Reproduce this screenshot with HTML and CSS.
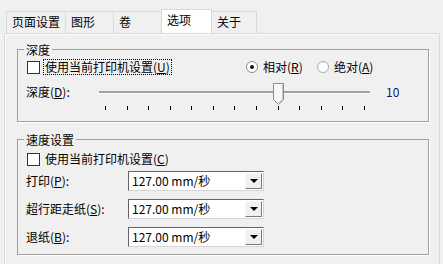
FILE: index.html
```html
<!DOCTYPE html>
<html lang="zh-CN">
<head>
<meta charset="utf-8">
<title>选项</title>
<link rel="stylesheet" href="styles.css">
</head>
<body>
<div class="tabs">
  <div class="tab t1">页面设置</div>
  <div class="tab t2">图形</div>
  <div class="tab t3">卷</div>
  <div class="tab active">选项</div>
  <div class="tab t5">关于</div>
</div>
<div class="panel">
  <fieldset class="group g1">
    <legend>深度</legend>
    <div class="row">
      <label class="check main"><span class="box"></span><span class="focus">使用当前打印机设置(<u>U</u>)</span></label>
      <label class="radio r1"><svg class="rdot" width="12" height="12" viewBox="0 0 12 12"><circle cx="6" cy="6" r="5.5" fill="#fff" stroke="#8a8a8a"/><circle cx="6" cy="6" r="2" fill="#111"/></svg><span>相对(<u>R</u>)</span></label>
      <label class="radio"><svg class="rdot" width="12" height="12" viewBox="0 0 12 12"><circle cx="6" cy="6" r="5.5" fill="#fff" stroke="#a8a8a8"/></svg><span>绝对(<u>A</u>)</span></label>
    </div>
    <div class="slider-row">
      <span class="slabel">深度(<u>D</u>):</span>
      <div class="slider">
        <div class="track"></div>
        <div class="ticks"><i></i><i></i><i></i><i></i><i></i><i></i><i></i><i></i><i></i><i></i><i></i><i></i><i></i></div>
        <svg class="thumb" width="11" height="22" viewBox="0 0 11 22"><path d="M0.5 0.5H10.5V16.5L5.5 21.5L0.5 16.5Z" fill="#f7f7f7" stroke="#8c8c8c"/><path d="M9.5 1.5V16L5.5 20" fill="none" stroke="#c4c4c4"/></svg>
      </div>
      <span class="value">10</span>
    </div>
  </fieldset>
  <fieldset class="group g2">
    <legend>速度设置</legend>
    <div class="row">
      <label class="check"><span class="box"></span><span class="plain">使用当前打印机设置(<u>C</u>)</span></label>
    </div>
    <div class="field first">
      <span class="flabel">打印(<u>P</u>):</span>
      <div class="combo"><span class="ctext">127.00 mm/秒</span><span class="cbtn"><i class="arrow"></i></span></div>
    </div>
    <div class="field">
      <span class="flabel">超行距走纸(<u>S</u>):</span>
      <div class="combo"><span class="ctext">127.00 mm/秒</span><span class="cbtn"><i class="arrow"></i></span></div>
    </div>
    <div class="field">
      <span class="flabel">退纸(<u>B</u>):</span>
      <div class="combo"><span class="ctext">127.00 mm/秒</span><span class="cbtn"><i class="arrow"></i></span></div>
    </div>
  </fieldset>
</div>
</body>
</html>
```
FILE: styles.css
```css
html, body {
  margin: 0;
  padding: 0;
}
body {
  width: 443px;
  height: 264px;
  overflow: hidden;
  background: #f0f0f0;
  color: #000;
  font-family: "Noto Sans CJK SC", "Noto Sans", sans-serif;
  font-size: 12px;
  line-height: 16px;
}
u {
  text-decoration: underline;
  text-underline-offset: 1px;
}

/* tabs */
.tabs {
  display: flex;
  align-items: flex-end;
  height: 33px;
  padding-left: 6px;
  box-sizing: border-box;
}
.tab {
  box-sizing: border-box;
  height: 22px;
  margin-right: -1px;
  padding-left: 5px;
  border: 1px solid #d9d9d9;
  border-bottom: none;
  background: #f0f0f0;
  line-height: 20px;
  white-space: nowrap;
}
.t1 { width: 60px; }
.t2 { width: 49px; }
.t3 { width: 49px; }
.t5 { width: 46px; }
.tab.active {
  position: relative;
  z-index: 1;
  width: 51px;
  height: 24px;
  background: #fff;
  padding-top: 1px;
  line-height: 18px;
}

/* panel */
.panel {
  box-sizing: border-box;
  width: 436px;
  height: 240px;
  margin-left: 4px;
  padding: 8px 0 0 12px;
  border: 1px solid #d9d9d9;
  box-shadow: inset 1px 1px 0 #fcfcfc;
}

/* group boxes */
.group {
  box-sizing: border-box;
  width: 412px;
  margin: 0;
  padding: 2px 8px 9px 8px;
  border: 1px solid #a0a0a0;
  box-shadow: 1px 1px 0 #fff;
  min-width: 0;
}
.group legend {
  padding: 0 2px;
  margin-left: -2px;
  line-height: 15px;
}
.g2 {
  margin-top: 10px;
  padding-top: 4px;
  padding-bottom: 7px;
}

.row {
  display: flex;
  align-items: center;
  height: 16px;
}
.check {
  display: flex;
  align-items: center;
}
.check.main {
  width: 220px;
}
.box {
  box-sizing: border-box;
  width: 13px;
  height: 13px;
  margin-left: 1px;
  border: 1px solid #333;
  background: #fff;
}
.focus {
  margin-left: 3px;
  padding: 0 1px;
  border: 1px dotted #000;
  line-height: 14px;
}
.plain {
  margin-left: 5px;
}
.radio {
  display: flex;
  align-items: center;
}
.r1 {
  width: 71px;
}
.rdot {
  display: block;
  margin-right: 5px;
}

/* slider */
.slider-row {
  display: flex;
  align-items: flex-start;
  margin-top: 4px;
  height: 33px;
}
.slabel {
  width: 73px;
  margin-top: 5px;
}
.slider {
  position: relative;
  width: 271px;
  height: 33px;
}
.track {
  margin-top: 12px;
  height: 2px;
  background: #a0a0a0;
  border-bottom: 1px solid #fff;
}
.ticks {
  display: flex;
  justify-content: space-between;
  width: 260px;
  margin-left: 6px;
  margin-top: 12px;
}
.ticks i {
  display: block;
  width: 1px;
  height: 4px;
  background: #000;
}
.thumb {
  position: absolute;
  left: 174px;
  top: 4px;
  display: block;
}
.value {
  margin-left: 16px;
  margin-top: 5px;
  color: #16166a;
}

/* combo rows */
.field {
  display: flex;
  align-items: center;
  height: 20px;
  margin-top: 8px;
}
.field.first {
  margin-top: 4px;
}
.flabel {
  width: 102px;
}
.combo {
  box-sizing: border-box;
  display: flex;
  align-items: center;
  width: 136px;
  height: 20px;
  background: #fff;
  border: 1px solid;
  border-color: #646464 #d4d4d4 #d4d4d4 #646464;
}
.ctext {
  flex: 1;
  padding-left: 3px;
  white-space: nowrap;
}
.cbtn {
  box-sizing: border-box;
  display: flex;
  align-items: center;
  justify-content: center;
  width: 17px;
  height: 16px;
  margin-right: 1px;
  background: #f0f0f0;
  border: 1px solid;
  border-color: #f8f8f8 #7a7a7a #7a7a7a #f8f8f8;
}
.arrow {
  display: block;
  width: 0;
  height: 0;
  border-left: 4px solid transparent;
  border-right: 4px solid transparent;
  border-top: 4px solid #000;
}
```
